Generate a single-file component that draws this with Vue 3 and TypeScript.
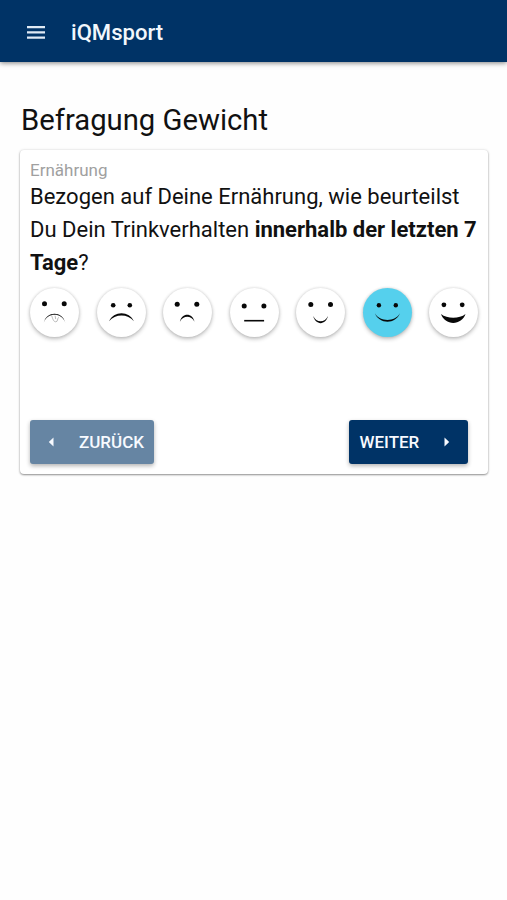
<script setup lang="ts">
import { ref } from 'vue'

interface Face {
  label: string
  eyes: { left: number; right: number; y: number; r: number }
  mouth: string
  tongue?: string
}

const faces: Face[] = [
  {
    label: 'Miserabel',
    eyes: { left: -10, right: 9.7, y: -8.7, r: 2.5 },
    mouth: 'M-10.8 10.2C-8 -1.8 8 -1.8 10.8 10.2C7.2 -.4 -7.2 -.4 -10.8 10.2Z',
    tongue: 'M-3 2.8C-2 5 -1.4 9.3 1.2 9.3C3.6 9.3 2.6 6 4.2 4.8M.6 3.2L1.2 6.6',
  },
  {
    label: 'Sehr schlecht',
    eyes: { left: -8.3, right: 8.3, y: -7.3, r: 2.3 },
    mouth: 'M-12.4 8.8C-8 -2 8 -2 12.4 8.8C6.5 1 -6.5 1 -12.4 8.8Z',
  },
  {
    label: 'Schlecht',
    eyes: { left: -10.3, right: 9.3, y: -8.3, r: 2.5 },
    mouth: 'M-7.6 9.2C-5.8 -.2 5.2 -.2 7 9.2C3.8 2.6 -4.4 2.6 -7.6 9.2Z',
  },
  {
    label: 'Neutral',
    eyes: { left: -10.3, right: 9.4, y: -6.4, r: 2.5 },
    mouth: 'M-10.3 7.4H9.6V9H-10.3Z',
  },
  {
    label: 'Gut',
    eyes: { left: -9.7, right: 10, y: -8.1, r: 2.5 },
    mouth: 'M-7.2 3.6C-4.6 10.6 4.8 10.6 7.4 3.6C5.6 13 -5.4 13 -7.2 3.6Z',
  },
  {
    label: 'Sehr gut',
    eyes: { left: -8.6, right: 8.3, y: -7.3, r: 2.2 },
    mouth: 'M-12.6 .8C-8 9.6 8 9.6 12.4 .8C8.4 12 -8.4 12 -12.6 .8Z',
  },
  {
    label: 'Ausgezeichnet',
    eyes: { left: -9.6, right: 8.7, y: -7.7, r: 2.4 },
    mouth: 'M-12.5 1.6C-6.5 6.6 6 6.6 12 1.6C8.5 13.3 -9 13.3 -12.5 1.6Z',
  },
]

const selected = ref(5)
</script>

<template>
  <div class="page">
    <header class="toolbar">
      <button class="menu" aria-label="Menü">
        <svg viewBox="0 0 18 13" width="18" height="13">
          <path d="M0 0H18V2.2H0ZM0 5.3H18V7.5H0ZM0 10.6H18V12.8H0Z" fill="currentColor" />
        </svg>
      </button>
      <span class="brand">iQMsport</span>
    </header>

    <main class="content">
      <h1 class="title">Befragung Gewicht</h1>
      <section class="card">
        <div class="category">Ernährung</div>
        <p class="question">
          Bezogen auf Deine Ernährung, wie beurteilst Du Dein Trinkverhalten
          <b>innerhalb der letzten 7 Tage</b>?
        </p>
        <div class="faces">
          <button
            v-for="(face, i) in faces"
            :key="face.label"
            class="face"
            :class="{ active: selected === i }"
            :aria-label="face.label"
            @click="selected = i"
          >
            <svg viewBox="-24.5 -24.5 49 49" width="49" height="49">
              <circle :cx="face.eyes.left" :cy="face.eyes.y" :r="face.eyes.r" />
              <circle :cx="face.eyes.right" :cy="face.eyes.y" :r="face.eyes.r" />
              <path :d="face.mouth" />
              <path v-if="face.tongue" class="tongue" :d="face.tongue" />
            </svg>
          </button>
        </div>
        <div class="actions">
          <button class="btn back">
            <svg viewBox="0 0 6 10" width="6" height="10"><path d="M5.5 .5V9.5L.8 5Z" fill="currentColor" /></svg>
            <span>ZURÜCK</span>
          </button>
          <button class="btn next">
            <span>WEITER</span>
            <svg viewBox="0 0 6 10" width="6" height="10"><path d="M.5 .5V9.5L5.2 5Z" fill="currentColor" /></svg>
          </button>
        </div>
      </section>
    </main>
  </div>
</template>

<style>
body {
  background: #fefefe;
}
</style>

<style scoped>
.page {
  min-height: 900px;
  font-family: Roboto, "Liberation Sans", sans-serif;
  color: #111;
}
button {
  border: 0;
  padding: 0;
  font: inherit;
}
.toolbar {
  display: flex;
  align-items: center;
  height: 62px;
  box-sizing: border-box;
  padding: 3px 27px 0;
  gap: 26px;
  background: #003366;
  color: #f2f7fc;
  box-shadow: 0 1px 5px rgba(0, 0, 0, 0.5);
}
.menu {
  display: flex;
  background: none;
  color: #dfeaf5;
}
.brand {
  font-size: 22.1px;
  font-weight: 500;
  line-height: 31px;
}
.content {
  padding: 38px 19px 0 20px;
}
.title {
  margin: 0 0 10px;
  padding-left: 1px;
  font-size: 29.25px;
  font-weight: 400;
  line-height: 40px;
}
.card {
  box-sizing: border-box;
  height: 324px;
  padding: 10px;
  border-radius: 4px;
  background: #fff;
  box-shadow: 0 1px 2px rgba(0, 0, 0, 0.4), 0 0 3px rgba(0, 0, 0, 0.13);
}
.category {
  font-size: 17px;
  line-height: 20px;
  color: #a0a0a0;
}
.question {
  margin: 0;
  font-size: 22px;
  line-height: 33px;
}
.faces {
  display: flex;
  justify-content: space-between;
  margin-top: 9px;
}
.face {
  display: flex;
  width: 49px;
  height: 49px;
  border-radius: 50%;
  background: #fff;
  box-shadow: 0 2px 4px rgba(0, 0, 0, 0.24), 0 0 3px rgba(0, 0, 0, 0.14);
}
.face.active {
  background: #55d0ed;
}
.face svg {
  fill: #080808;
}
.face .tongue {
  fill: none;
  stroke: #aaa;
  stroke-width: 0.8;
}
.actions {
  display: flex;
  justify-content: space-between;
  margin-top: 83px;
  padding-right: 10px;
}
.btn {
  display: flex;
  align-items: center;
  justify-content: space-between;
  box-sizing: border-box;
  height: 43.5px;
  border-radius: 3px;
  color: #f7faff;
  font-size: 17px;
  font-weight: 500;
  box-shadow: 0 2px 4px rgba(0, 0, 0, 0.3);
}
.back {
  width: 124px;
  padding: 0 10px 0 18px;
  background: #6685a3;
}
.next {
  width: 119px;
  padding: 0 18px 0 10.5px;
  background: #003366;
}
</style>
